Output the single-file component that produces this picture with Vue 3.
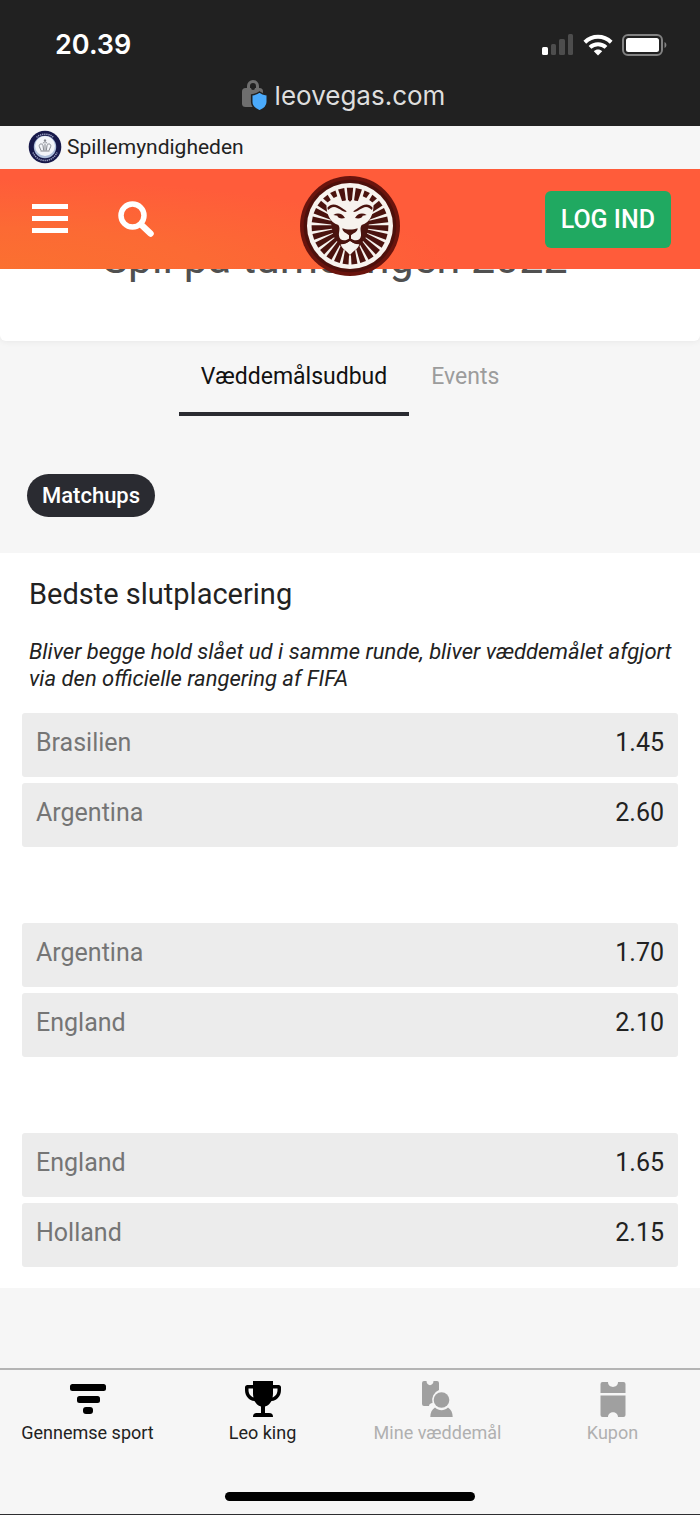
<script setup>
import { ref } from 'vue'

const tabs = ['Væddemålsudbud', 'Events']
const activeTab = ref(tabs[0])

const matchups = [
  [
    { team: 'Brasilien', odds: '1.45' },
    { team: 'Argentina', odds: '2.60' },
  ],
  [
    { team: 'Argentina', odds: '1.70' },
    { team: 'England', odds: '2.10' },
  ],
  [
    { team: 'England', odds: '1.65' },
    { team: 'Holland', odds: '2.15' },
  ],
]

// Mane of the lion: short rays over the forehead, long ones round the cheeks.
const rayCount = 27
const rayShapes = {
  crown: 'M170.500 68L189.500 68L186 104L180 110L174 104z',
  temple: 'M171 68L189 68L186 86L174 86z',
  cheek: 'M171 68L189 68L184.500 140L175.500 140z',
}
const rays = Array.from({ length: rayCount }, (_, i) => {
  const step = Math.min(i, rayCount - i)
  const kind = step < 2 ? 'crown' : step < 4 ? 'temple' : 'cheek'
  return { angle: (i * 360) / rayCount, d: rayShapes[kind] }
})
</script>

<template>
  <div class="page">
    <div class="browser">
      <div class="status">
        <span class="time">20.39</span>
        <div class="indicators">
          <svg width="32" height="22" viewBox="0 0 32 22" aria-hidden="true">
            <rect x="0" y="13" width="6" height="8" rx="1.5" fill="#fff" />
            <rect x="9" y="10" width="5" height="11" rx="1.5" fill="#4d4d4d" />
            <rect x="17" y="5" width="6" height="16" rx="1.5" fill="#4d4d4d" />
            <rect x="26" y="0" width="5" height="21" rx="1.5" fill="#4d4d4d" />
          </svg>
          <svg width="30" height="22" viewBox="0 0 30 22" aria-hidden="true">
            <g fill="none" stroke="#fff" stroke-width="4">
              <path d="M1.800 8.200C9.500 1 20.500 1 28.200 8.200" />
              <path d="M7 13.400C11.500 9.200 18.500 9.200 23 13.400" />
            </g>
            <path d="M10.800 17.200c2.400-2.200 6-2.200 8.400 0L15 21.400z" fill="#fff" />
          </svg>
          <svg width="46" height="22" viewBox="0 0 46 22" aria-hidden="true">
            <rect x="1" y="1" width="39" height="20" rx="5" fill="none" stroke="#828282" stroke-width="2" />
            <rect x="4" y="4" width="33" height="14" rx="2.500" fill="#fff" />
            <path d="M42.500 8c2.500 1 2.500 5 0 6z" fill="#828282" />
          </svg>
        </div>
      </div>
      <div class="address">
        <svg width="28" height="32" viewBox="0 0 28 32" aria-hidden="true">
          <path d="M7.500 12V7a4.500 4.500 0 0 1 9 0v5" fill="none" stroke="#6e6e6e" stroke-width="3" />
          <rect x="1" y="9" width="21" height="19" rx="3.500" fill="#6e6e6e" />
          <circle cx="12" cy="9" r="2" fill="#212121" />
          <path d="M18.500 13c2 1.600 4.400 2.400 7.800 3v7c0 4.500-3.500 7.200-7.800 9-4.300-1.800-7.800-4.500-7.800-9v-7c3.400-.6 5.800-1.400 7.800-3z" fill="#4aaafc" stroke="#212121" stroke-width="1.600" />
        </svg>
        <span>leovegas.com</span>
      </div>
    </div>

    <div class="authority">
      <svg width="34" height="34" viewBox="0 0 34 34" aria-hidden="true">
        <circle cx="17" cy="17" r="16.300" fill="#17194a" />
        <path d="M8.500 7.300A13 13 0 0 1 25.500 7.300M5 22.500A13 13 0 0 0 29 22.500" fill="none" stroke="#9ea4c4" stroke-width="1.500" stroke-dasharray="1.300 .8" />
        <circle cx="17" cy="17" r="11.200" fill="#aebfdb" />
        <circle cx="17" cy="16" r="10" fill="#f3f5f9" />
        <g fill="none" stroke="#85888f" stroke-width="1">
          <path d="M13 20.500l-1.700-4c-.7-3 3-3.400 3.700-1l.7 5M21 20.500l1.700-4c.7-3-3-3.400-3.700-1l-.7 5M17 20.500v-7M15 13.500c0-2 4-2 4 0M12.500 21h9M17 9v3M15.800 10.500h2.400" />
        </g>
      </svg>
      <span>Spillemyndigheden</span>
    </div>

    <header class="topbar">
      <div class="tools">
        <button type="button" class="icon-button" aria-label="Menu">
          <svg width="36" height="30" viewBox="0 0 36 30" fill="#fff">
            <rect width="36" height="5" y="0" />
            <rect width="36" height="5" y="12" />
            <rect width="36" height="5" y="24" />
          </svg>
        </button>
        <button type="button" class="icon-button" aria-label="Søg">
          <svg width="36" height="36" viewBox="0 0 36 36" fill="none" stroke="#fff">
            <circle cx="14.500" cy="14.500" r="11.500" stroke-width="5.500" />
            <path d="M23.500 24L32.500 32.500" stroke-width="6.500" stroke-linecap="round" />
          </svg>
        </button>
      </div>
      <a href="#" class="brand" aria-label="LeoVegas">
        <svg width="100" height="100" viewBox="30 33 300 300">
          <circle cx="180" cy="183" r="150" fill="#6a140d" />
          <circle cx="180" cy="183" r="139" fill="#4e100b" />
          <circle cx="180" cy="183" r="129" fill="#f7f3ee" />
          <g fill="#4a130e">
            <path v-for="ray in rays" :key="ray.angle" :d="ray.d" :transform="`rotate(${ray.angle} 180 183)`" />
            <path d="M120 156L240 156L230 214L206 246L180 272L154 246L130 214z" />
          </g>
          <path
            fill="#f7f3ee"
            d="M110 116C122 102 142 104 152 112C160 105 169 106 180 112C191 106 200 105 208 112C218 104 238 102 250 116C252 130 248 146 243 156C237 168 228 176 215 180C208 190 214 200 213 212C211 227 196 231 180 219C164 231 149 227 147 212C146 200 152 190 145 180C132 176 123 168 117 156C112 146 108 130 110 116z"
          />
          <path fill="#f7f3ee" d="M152 238C164 239 172 232 180 228C188 232 196 239 208 238C205 252 191 257 180 270C169 257 155 252 152 238z" />
          <g fill="#4a130e">
            <path d="M112 128C124 114 140 117 157 130C165 136 171 138 169 141C156 141 146 127 132 126C124 126 120 131 114 135z" />
            <path d="M248 128C236 114 220 117 203 130C195 136 189 138 191 141C204 141 214 127 228 126C236 126 240 131 246 135z" />
            <path d="M130 150C143 142 157 145 165 159C154 162 144 160 142 152z" />
            <path d="M230 150C217 142 203 145 195 159C206 162 216 160 218 152z" />
            <path d="M157 190C170 195 190 195 203 190C203 202 190 204 183 211V226H177V211C170 204 157 202 157 190z" />
          </g>
          <path d="M145 228C162 237 174 230 180 222C186 230 198 237 215 228" fill="none" stroke="#4a130e" stroke-width="5" />
        </svg>
      </a>
      <button type="button" class="login">LOG IND</button>
    </header>

    <main>
      <section class="hero">
        <h1>Spil på turneringen 2022</h1>
      </section>

      <div class="tabs" role="tablist">
        <button
          v-for="tab in tabs"
          :key="tab"
          type="button"
          role="tab"
          :aria-selected="tab === activeTab"
          :class="['tab', { active: tab === activeTab }]"
          @click="activeTab = tab"
        >
          {{ tab }}
        </button>
      </div>

      <div class="filters">
        <button type="button" class="chip">Matchups</button>
      </div>

      <section class="market">
        <h2>Bedste slutplacering</h2>
        <p>Bliver begge hold slået ud i samme runde, bliver væddemålet afgjort via den officielle rangering af FIFA</p>
        <div class="groups">
          <div v-for="(group, index) in matchups" :key="index" class="group">
            <button v-for="pick in group" :key="pick.team" type="button" class="pick">
              <span>{{ pick.team }}</span>
              <span class="odds">{{ pick.odds }}</span>
            </button>
          </div>
        </div>
      </section>
    </main>

    <footer class="bottom">
      <nav>
        <a href="#">
          <svg width="38" height="38" viewBox="0 0 38 38">
            <rect x="1" y="4" width="36" height="7" rx="2.500" />
            <rect x="8" y="16" width="23" height="7" rx="2.500" />
            <rect x="14" y="27" width="10" height="7" rx="3" />
          </svg>
          <span>Gennemse sport</span>
        </a>
        <a href="#">
          <svg width="38" height="38" viewBox="0 0 38 38">
            <path d="M9 1h20v4h5.500a2.500 2.500 0 0 1 2.500 2.500V10c0 6-4 10.500-9.500 11-1.400 2.600-3.500 4.600-6.500 5.500V33h4c3 0 4 1.500 4 4H9c0-2.500 1-4 4-4h4v-6.500c-3-.9-5.100-2.900-6.500-5.500C5 20.500 1 16 1 10V7.500A2.500 2.500 0 0 1 3.500 5H9zM9 8.500H4.500V10c0 3.500 2 6.500 5 7.400-.4-1.400-.5-3-.5-4.400zM29 8.500V13c0 1.400-.1 3-.5 4.400 3-.9 5-3.900 5-7.400V8.500z" fill-rule="evenodd" />
          </svg>
          <span>Leo king</span>
        </a>
        <a href="#" class="muted">
          <svg width="38" height="38" viewBox="0 0 38 38">
            <path d="M5 1h2.500c0 5.500 7 5.500 7 0H18a2 2 0 0 1 2 2v7a11 11 0 0 0-6.500 13c-2 .3-3.500 1.300-3.500 3H5a2 2 0 0 1-2-2V3a2 2 0 0 1 2-2z" />
            <circle cx="22.500" cy="20" r="7.800" />
            <path d="M16 27.500c4 3.500 9 3.500 13 0 3 2 4.700 5 4.700 9.500H11.300c0-4.500 1.700-7.500 4.700-9.500z" />
          </svg>
          <span>Mine væddemål</span>
        </a>
        <a href="#" class="muted">
          <svg width="38" height="38" viewBox="0 0 38 38">
            <path d="M8.500 2H14c0 6.500 10 6.500 10 0h5.500a2 2 0 0 1 2 2v9h-25V4a2 2 0 0 1 2-2z" />
            <path d="M6.500 15.500h25V35a2 2 0 0 1-2 2H24c0-6.500-10-6.500-10 0H8.500a2 2 0 0 1-2-2z" />
          </svg>
          <span>Kupon</span>
        </a>
      </nav>
      <div class="home"></div>
    </footer>
  </div>
</template>

<style>
body {
  margin: 0;
  background: #f6f6f6;
}
</style>

<style scoped>
.page {
  display: flex;
  flex-direction: column;
  min-height: 100vh;
  box-sizing: border-box;
  border-bottom: 1px solid #2e2e30;
  background: #f6f6f6;
  color: #222;
  font-family: Roboto, "Liberation Sans", sans-serif;
}

button {
  border: 0;
  padding: 0;
  background: none;
  color: inherit;
  font: inherit;
  cursor: pointer;
}

a {
  color: inherit;
  text-decoration: none;
}

svg {
  display: block;
  flex: none;
}

.browser {
  height: 126px;
  background: #212121;
  color: #fff;
  font-family: Inter, "Liberation Sans", sans-serif;
}

.status {
  display: flex;
  align-items: center;
  justify-content: space-between;
  height: 64px;
  padding: 25px 32px 0 55px;
  box-sizing: border-box;
}

.time {
  font-size: 27px;
  font-weight: 600;
}

.indicators {
  display: flex;
  gap: 9px;
}

.address {
  display: flex;
  align-items: center;
  justify-content: center;
  gap: 6px;
  height: 62px;
  padding-right: 14px;
  color: #dedede;
  font-size: 26px;
}

.authority {
  display: flex;
  align-items: center;
  gap: 5px;
  height: 43px;
  padding: 0 28px 2px;
  box-sizing: border-box;
  font-size: 21px;
}

.topbar {
  position: relative;
  z-index: 1;
  display: grid;
  grid-template-columns: 1fr 100px 1fr;
  grid-template-rows: 100%;
  align-items: center;
  height: 100px;
  padding: 0 29px;
  background: radial-gradient(ellipse 65% 90% at 0 100%, #fb7030 0%, #fc6a34 45%, #ff5c3a 100%);
}

.tools {
  display: flex;
  align-items: center;
  gap: 50px;
  padding-left: 3px;
}

.icon-button {
  display: block;
}

.brand {
  align-self: start;
  margin-top: 7px;
}

.login {
  justify-self: end;
  height: 57px;
  padding: 0 16px;
  border-radius: 6px;
  background: #20a961;
  color: #fff;
  font-size: 25px;
  font-weight: 500;
}

.hero {
  display: flow-root;
  height: 72px;
  border-radius: 0 0 6px 6px;
  background: #fff;
  box-shadow: 0 1px 6px rgba(0, 0, 0, 0.06);
}

h1 {
  margin: -37px 30px 0 0;
  color: #505050;
  font-size: 43px;
  font-weight: 400;
  line-height: 52px;
  text-align: center;
}

.tabs {
  display: flex;
  justify-content: center;
  height: 75px;
}

.tab {
  padding: 0 22px;
  border-bottom: 4px solid transparent;
  color: #9c9c9c;
  font-size: 23px;
}

.tab.active {
  border-color: #2a2b31;
  color: #111;
}

.filters {
  padding: 58px 27px 36px;
}

.chip {
  display: block;
  height: 43px;
  padding: 0 15px;
  border-radius: 22px;
  background: #2a2b31;
  color: #fff;
  font-size: 22px;
  font-weight: 500;
}

.market {
  padding: 23px 22px 21px;
  background: #fff;
}

h2 {
  margin: 0 7px 26px;
  font-size: 29px;
  font-weight: 400;
  line-height: 36px;
}

.market p {
  margin: 0 0 21px 7px;
  font-size: 22px;
  font-style: italic;
  line-height: 27px;
}

.groups {
  display: grid;
  gap: 76px;
}

.group {
  display: grid;
  gap: 6px;
}

.pick {
  display: flex;
  align-items: center;
  justify-content: space-between;
  height: 64px;
  padding: 0 14px 6px;
  border-radius: 3px;
  background: #ececec;
  color: #757575;
  font-size: 25px;
}

.odds {
  color: #222;
}

.bottom {
  margin-top: auto;
  border-top: 2px solid #b4b4b4;
}

nav {
  display: grid;
  grid-template-columns: repeat(4, 1fr);
  padding: 10px 0 47px;
}

nav a {
  display: grid;
  justify-items: center;
  gap: 3px;
  font-size: 18px;
  line-height: 24px;
}

nav svg {
  fill: #000;
}

.muted {
  color: #b0b0b0;
}

.muted svg {
  fill: #a0a0a0;
}

.home {
  width: 250px;
  height: 9px;
  margin: 0 auto 13px;
  border-radius: 5px;
  background: #000;
}
</style>
